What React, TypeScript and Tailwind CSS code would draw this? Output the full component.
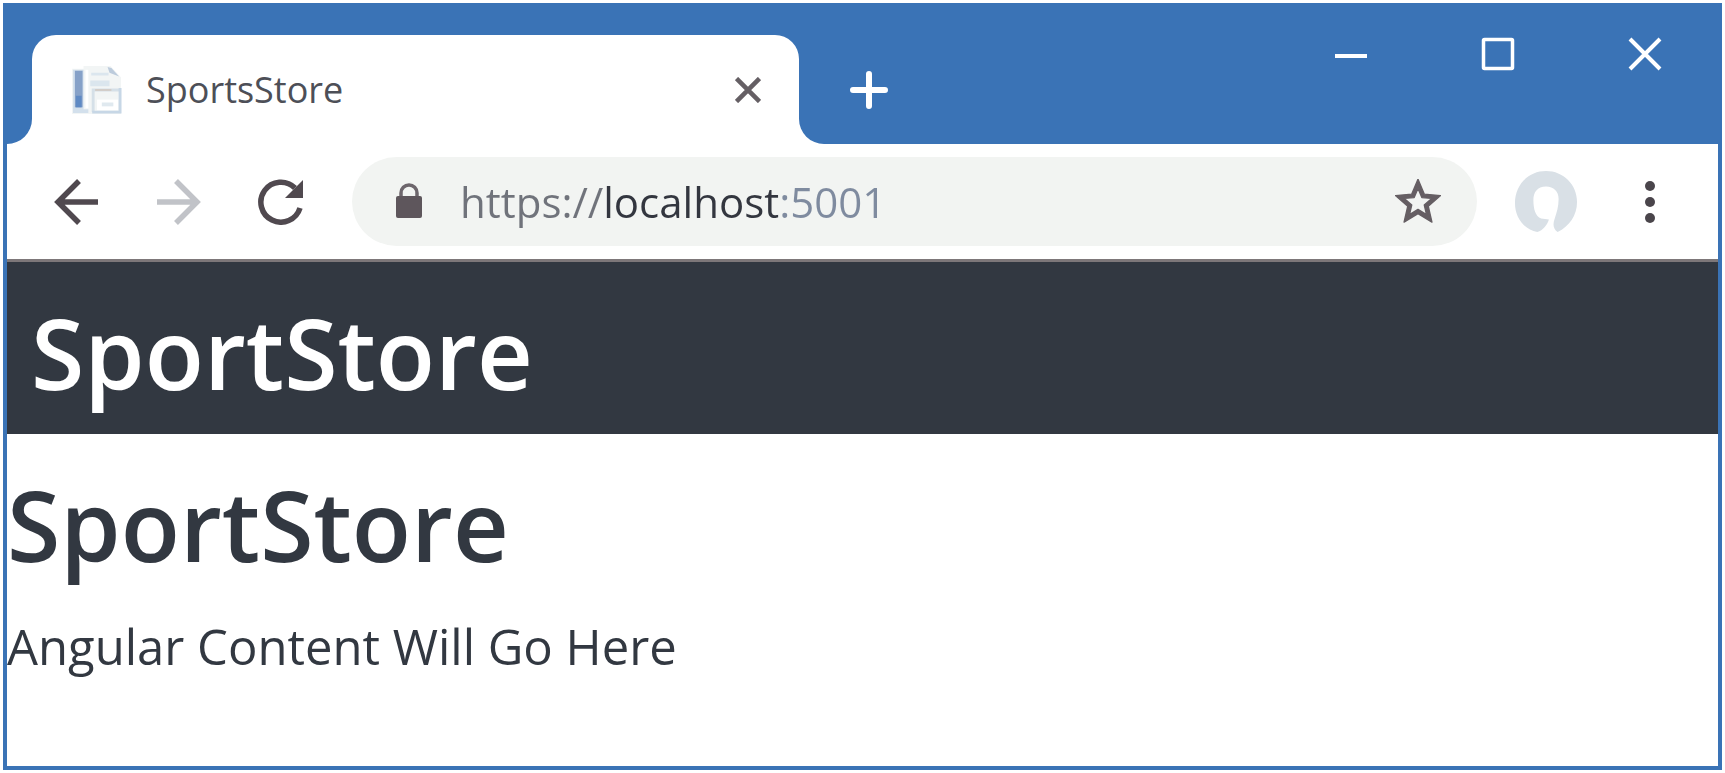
import React from "react";

function TabStrip() {
  return (
    <div className="bg-[#3a73b6] pt-7">
      <div className="flex h-[109px] bg-white">
        <div className="w-[25px] shrink-0 rounded-br-[25px] bg-[#3a73b6]" />
        <div className="flex w-[767px] shrink bg-[#3a73b6]">
          <div
            role="tab"
            aria-selected="true"
            className="flex min-w-0 flex-1 items-center rounded-t-3xl bg-white pl-10 pr-[38px]"
          >
            <svg width="50" height="52" viewBox="0 0 52 52" aria-hidden="true">
              <path d="M0 4h12V1h28l11 12v38H0z" fill="#f2f5f5" />
              <path d="M1 5h11v41h5v4H1z" fill="#d3e0ec" />
              <rect x="3" y="6" width="8" height="38" fill="#86a1c8" />
              <path d="M4 32h6v12H4z" fill="#5f8ac4" />
              <rect x="14" y="5" width="3" height="40" fill="#fff" />
              <path d="M20 8h18v3H20zM19 16h20v6H19z" fill="#dbe6ee" />
              <path d="M37 2l2 6 10 4-8-9z" fill="#bccbdc" />
              <path d="M22 49V26h27" fill="none" stroke="#d5e0e8" strokeWidth="3" />
              <path d="M24 26h17" stroke="#d2cdc8" strokeWidth="2" />
              <rect x="26" y="36" width="22" height="11" fill="#fff" />
              <rect x="31" y="39" width="12" height="4" fill="#e0e9ef" />
              <path d="M21 49h29V24" fill="none" stroke="#c7d7e6" strokeWidth="3" />
            </svg>
            <span className="ml-6 flex-1 truncate text-[36px] leading-[52px] text-[#4d4f57]">SportsStore</span>
            <button type="button" aria-label="Close tab" className="shrink-0">
              <svg width="26" height="26" viewBox="0 0 26 26" fill="none" stroke="#655f64" strokeWidth="4.6">
                <path d="M1.500 1.500l23 23M24.500 1.500l-23 23" />
              </svg>
            </button>
          </div>
        </div>
        <div className="flex min-w-0 flex-1 rounded-bl-[25px] bg-[#3a73b6] pl-[50px]">
          <button type="button" aria-label="New tab" className="shrink-0 self-center">
            <svg width="40" height="40" viewBox="0 0 40 40" fill="none" stroke="#fff" strokeWidth="6" strokeLinecap="round">
              <path d="M20 4v32M4 20h32" />
            </svg>
          </button>
          <div className="ml-auto flex h-[38px] text-white">
            <button type="button" aria-label="Minimize" className="flex w-[147px] items-center justify-center">
              <svg width="34" height="34" viewBox="0 0 34 34" fill="none" stroke="currentColor" strokeWidth="4">
                <path d="M1 19h32" />
              </svg>
            </button>
            <button type="button" aria-label="Maximize" className="flex w-[147px] items-center justify-center">
              <svg width="34" height="34" viewBox="0 0 34 34" fill="none" stroke="currentColor" strokeWidth="3.5">
                <rect x="2.500" y="2.500" width="29" height="29" rx="1" />
              </svg>
            </button>
            <button type="button" aria-label="Close window" className="flex w-[147px] items-center justify-center">
              <svg width="34" height="34" viewBox="0 0 34 34" fill="none" stroke="currentColor" strokeWidth="4">
                <path d="M2 2l30 30M32 2L2 32" />
              </svg>
            </button>
          </div>
        </div>
      </div>
    </div>
  );
}

function Toolbar() {
  return (
    <div className="flex h-[118px] items-center border-b-[3px] border-[#7d7779] bg-white pl-[47px] pr-[62px]">
      <div className="flex shrink-0 gap-[57px]">
        <button type="button" aria-label="Back">
          <svg width="45" height="46" viewBox="0 0 45 46" fill="none" stroke="#50494f" strokeWidth="5.500">
            <path d="M44 23H4M25 2L4 23l21 21" />
          </svg>
        </button>
        <button type="button" aria-label="Forward">
          <svg width="45" height="46" viewBox="0 0 45 46" fill="none" stroke="#c1c3c8" strokeWidth="5.500">
            <path d="M1 23h40M20 2l21 21-21 21" />
          </svg>
        </button>
        <button type="button" aria-label="Reload">
          <svg width="46" height="46" viewBox="0 0 46 46" fill="none">
            <path d="M42 29A20 20 0 1 1 37 9" stroke="#50494f" strokeWidth="5.500" />
            <path d="M45 1v18H27z" fill="#50494f" />
          </svg>
        </button>
      </div>
      <form
        onSubmit={(e: React.FormEvent) => e.preventDefault()}
        className="ml-12 flex h-[89px] min-w-0 flex-1 items-center rounded-full bg-[#f2f4f2] pl-11 pr-9"
      >
        <svg width="26" height="38" viewBox="0 0 26 38" className="shrink-0" aria-hidden="true">
          <path d="M5 16v-6a8 8 0 0 1 16 0v6" fill="none" stroke="#6d666c" strokeWidth="3.500" />
          <rect y="13" width="26" height="22" rx="2" fill="#5e565c" />
        </svg>
        <input
          type="text"
          aria-label="Address"
          defaultValue="https://localhost:5001"
          className="ml-[38px] min-w-0 flex-1 bg-[linear-gradient(to_right,#70737b_0_142px,#33363f_142px_318px,#7f8b9f_318px)] bg-clip-text p-0 text-[42px] leading-[60px] text-transparent outline-none"
        />
        <button type="button" aria-label="Bookmark this page" className="shrink-0">
          <svg
            width="46"
            height="46"
            viewBox="1.8 1.9 20.4 20.4"
            fill="#655e63"
            stroke="#655e63"
            strokeWidth="0.6"
            strokeLinejoin="round"
          >
            <path d="M22 9.240l-7.190-.620L12 2 9.190 8.630 2 9.240l5.460 4.730L5.820 21 12 17.270 18.180 21l-1.630-7.030L22 9.240zM12 15.400l-3.760 2.270 1-4.280-3.320-2.880 4.380-.380L12 6.100l1.710 4.040 4.380.380-3.320 2.880 1 4.280L12 15.400z" />
          </svg>
        </button>
      </form>
      <button type="button" aria-label="Profile" className="ml-[37px] shrink-0">
        <svg width="64" height="64" viewBox="0 0 66 66">
          <path
            d="M24 64C10 61 1 49 1 34 1 15 15 1 33 1s32 14 32 32c0 14-8 25-20 31-5-3-5-9-3-14 2-6 4-12 4-20 0-8-5-13-13-13-9 0-13 6-13 14 0 9 2 17 8 19l8 1c-2 6-6 11-12 13z"
            fill="#d9e0e6"
          />
        </svg>
      </button>
      <button type="button" aria-label="Menu" className="ml-[66px] shrink-0">
        <svg width="12" height="44" viewBox="0 0 12 44" fill="#4a454b">
          <circle cx="6" cy="6" r="5" />
          <circle cx="6" cy="22" r="5" />
          <circle cx="6" cy="38" r="5" />
        </svg>
      </button>
    </div>
  );
}

export default function App() {
  return (
    <div className="flex min-h-screen bg-white p-[3px] font-['Open_Sans','Noto_Sans',sans-serif]">
      <div className="flex min-w-0 flex-1 flex-col border-4 border-[#3a73b6] bg-white">
        <TabStrip />
        <Toolbar />
        <header className="bg-[#323841] px-6 pb-3 pt-5 text-white">
          <div className="text-[97px] font-semibold leading-[140px]">SportStore</div>
        </header>
        <main className="pt-5 text-[#323841]">
          <h1 className="text-[97px] font-semibold leading-[140px]">SportStore</h1>
          <p className="mt-4 text-[49px] leading-[72px]">Angular Content Will Go Here</p>
        </main>
      </div>
    </div>
  );
}
